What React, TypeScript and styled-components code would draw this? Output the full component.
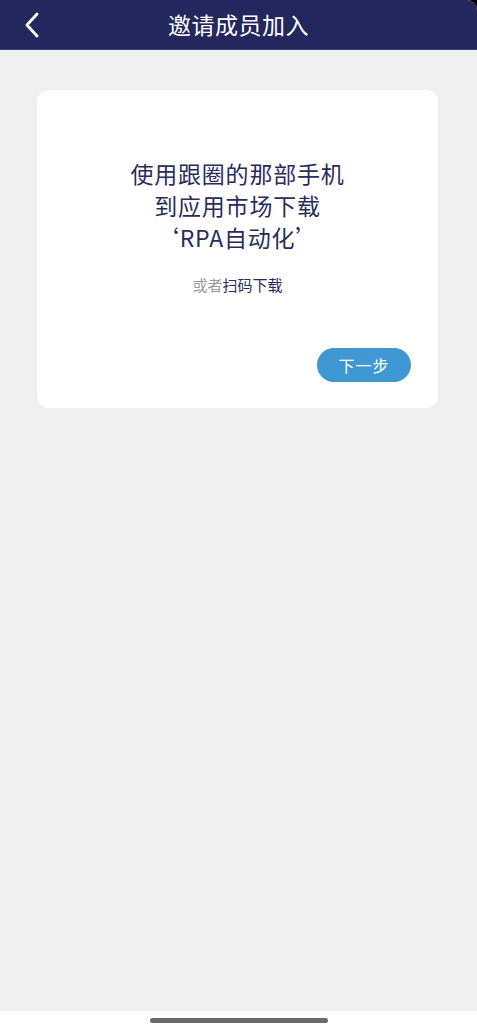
import React from "react";
import styled, { createGlobalStyle } from "styled-components";

const Global = createGlobalStyle`
  html, body { margin: 0; padding: 0; background: #000; }
  body { font-family: "Noto Sans CJK SC", "Noto Sans", sans-serif; }
  * { box-sizing: border-box; }
`;

const Screen = styled.div`
  width: 477px;
  height: 1024px;
  display: flex;
  flex-direction: column;
  background: #efefef;
  overflow: hidden;
  border-top-right-radius: 10px;
`;

const Header = styled.header`
  height: 50px;
  flex: 0 0 50px;
  background: #23275d;
  display: grid;
  grid-template-columns: 60px 1fr 60px;
  align-items: center;
  border-bottom: 1px solid #3a3f72;
`;

const BackButton = styled.button`
  border: none;
  background: none;
  padding: 0 0 0 24px;
  height: 100%;
  display: flex;
  align-items: center;
  cursor: pointer;
`;

const Title = styled.h1`
  margin: 0;
  text-align: center;
  color: #ffffff;
  font-size: 23px;
  font-weight: 400;
  letter-spacing: 0.5px;
  line-height: 47px;
`;

const Main = styled.main`
  flex: 1;
  padding: 40px 39px 0 37px;
`;

const Card = styled.section`
  background: #ffffff;
  border-radius: 12px;
  padding: 67px 27px 26px;
  display: flex;
  flex-direction: column;
  align-items: center;
`;

const Headline = styled.p`
  margin: 0;
  text-align: center;
  color: #2a2d5c;
  font-size: 23px;
  line-height: 32px;
  letter-spacing: 0.8px;
  font-weight: 400;
`;

const Sub = styled.p`
  margin: 22px 0 0;
  font-size: 15px;
  line-height: 20px;
  color: #2a2d5c;
  text-align: center;
`;

const Muted = styled.span`
  color: #9a9a9e;
`;

const NextRow = styled.div`
  align-self: stretch;
  display: flex;
  justify-content: flex-end;
  margin-top: 53px;
`;

const NextButton = styled.button`
  width: 94px;
  height: 34px;
  border-radius: 17px;
  border: none;
  background: #3f97d4;
  color: #ffffff;
  font-family: "Noto Sans CJK SC", "Noto Sans", sans-serif;
  font-size: 16px;
  letter-spacing: 1px;
  cursor: pointer;
`;

const HomeBar = styled.div`
  flex: 0 0 13px;
  background: #ffffff;
  display: flex;
  justify-content: center;
  padding-top: 7px;
`;

const Indicator = styled.div`
  width: 178px;
  height: 5px;
  border-radius: 3px;
  background: #6a6a6a;
`;

export default function App() {
  return (
    <>
      <Global />
      <Screen>
        <Header>
          <BackButton aria-label="返回">
            <svg width="16" height="26" viewBox="0 0 16 26" fill="none">
              <path d="M13 2 L3 13 L13 24" stroke="#ffffff" strokeWidth="2.8" strokeLinecap="round" strokeLinejoin="round" />
            </svg>
          </BackButton>
          <Title>邀请成员加入</Title>
          <div />
        </Header>
        <Main>
          <Card>
            <Headline>
              使用跟圈的那部手机
              <br />
              到应用市场下载
              <br />
              ‘RPA自动化’
            </Headline>
            <Sub>
              <Muted>或者</Muted>扫码下载
            </Sub>
            <NextRow>
              <NextButton>下一步</NextButton>
            </NextRow>
          </Card>
        </Main>
        <HomeBar>
          <Indicator />
        </HomeBar>
      </Screen>
    </>
  );
}
